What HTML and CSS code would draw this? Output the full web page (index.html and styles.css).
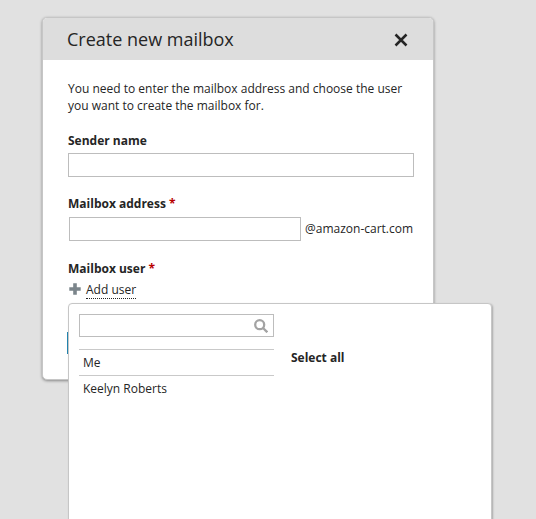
FILE: index.html
```html
<!DOCTYPE html>
<html lang="en">
<head>
<meta charset="utf-8">
<title>Create new mailbox</title>
<link rel="stylesheet" href="styles.css">
</head>
<body>
<section class="dialog">
  <header class="dialog-header">
    <h1>Create new mailbox</h1>
    <button class="close" aria-label="Close">
      <svg width="14" height="14" viewBox="0 0 14 14"><path d="M1.5 1.5 12.5 12.5M12.5 1.5 1.5 12.5"/></svg>
    </button>
  </header>
  <form class="dialog-body">
    <p class="intro">You need to enter the mailbox address and choose the user<br>you want to create the mailbox for.</p>
    <label class="label" for="sender">Sender name</label>
    <input class="input" id="sender" type="text">
    <label class="label label-address" for="address">Mailbox address <span class="required">*</span></label>
    <div class="address-row">
      <input class="input" id="address" type="text">
      <span class="domain">@amazon-cart.com</span>
    </div>
    <div class="label label-user">Mailbox user <span class="required">*</span></div>
    <div class="add-user">
      <svg width="12" height="12" viewBox="0 0 12 12"><path d="M6 .3v11.4M.3 6h11.4"/></svg>
      <span class="add-link">Add user</span>
    </div>
    <button class="submit" type="button"></button>
  </form>
  <div class="picker">
    <div class="users">
      <div class="search">
        <input type="text">
        <svg width="14" height="14" viewBox="0 0 14 14"><circle cx="5.7" cy="5.7" r="4.5"/><path d="m9 9 4.3 4.3"/></svg>
      </div>
      <ul>
        <li>Me</li>
        <li>Keelyn Roberts</li>
      </ul>
    </div>
    <div class="select-all">Select all</div>
  </div>
</section>
</body>
</html>
```
FILE: styles.css
```css
* { box-sizing: border-box; }

body {
  margin: 0;
  height: 519px;
  overflow: hidden;
  padding: 17px 0 0 42px;
  background: #e1e1e1;
  color: #252525;
  font: 12px/17px "Open Sans", sans-serif;
}

button { padding: 0; border: 0; background: none; }

.dialog {
  position: relative;
  width: 392px;
  height: 363px;
  border: 1px solid #c6c6c6;
  border-radius: 5px;
  background: #fff;
  box-shadow: 0 1px 3px rgba(0, 0, 0, .4);
}

.dialog-header {
  display: flex;
  align-items: center;
  justify-content: space-between;
  height: 42px;
  padding: 0 25px 0 24px;
  border-radius: 4px 4px 0 0;
  background: #ddd;
}

h1 {
  margin: 0;
  font-size: 18px;
  line-height: 24px;
  font-weight: 400;
}

.close { width: 14px; height: 14px; margin-top: 2px; }

svg { display: block; fill: none; }

.close svg { stroke: #252525; stroke-width: 2.5; }

.dialog-body { padding: 20px 19px 0 25px; }

.intro { margin: 0 0 18px; white-space: nowrap; }

.label { display: block; font-weight: 700; }

.label-address { margin-top: 18px; }

.label-user { margin-top: 19px; }

.required { color: #b80000; }

.input {
  display: block;
  width: 100%;
  height: 24px;
  margin: 4px 0 0;
  border: 1px solid #bdbdbd;
  border-radius: 0;
  background: #fff;
}

.address-row {
  display: flex;
  align-items: flex-start;
  gap: 4px;
  margin: 5px 0 0 1px;
}

.address-row .input { flex: none; width: 232px; margin: 0; }

.domain { padding-top: 3px; }

.add-user {
  display: flex;
  align-items: flex-start;
  gap: 5px;
  margin: 4px 0 0 1px;
}

.add-user svg { margin-top: 2px; stroke: #7b858b; stroke-width: 3.6; }

.add-link {
  height: 18px;
  border-bottom: 1px dotted #252525;
}

.submit {
  display: block;
  width: 80px;
  height: 22px;
  margin: 33px 0 0 -1px;
  background: #2385b0;
}

.picker {
  position: absolute;
  top: 285px;
  left: 25px;
  display: flex;
  gap: 17px;
  width: 424px;
  height: 240px;
  padding: 10px;
  border: 1px solid #c6c6c6;
  border-radius: 4px;
  background: #fff;
  box-shadow: 1px 1px 2px rgba(0, 0, 0, .25);
}

.users { width: 195px; }

.search {
  display: flex;
  align-items: center;
  height: 23px;
  padding-right: 5px;
  border: 1px solid #bdbdbd;
}

.search input {
  flex: 1;
  min-width: 0;
  padding: 0 4px;
  border: 0;
  outline: 0;
}

.search svg { stroke: #a3a3a3; stroke-width: 2.3; }

ul { margin: 12px 0 0; padding: 0; list-style: none; }

li {
  height: 26px;
  padding: 4px 4px 0;
  border-top: 1px solid #c9c9c9;
}

.select-all { margin-top: 35px; font-weight: 700; }
```
